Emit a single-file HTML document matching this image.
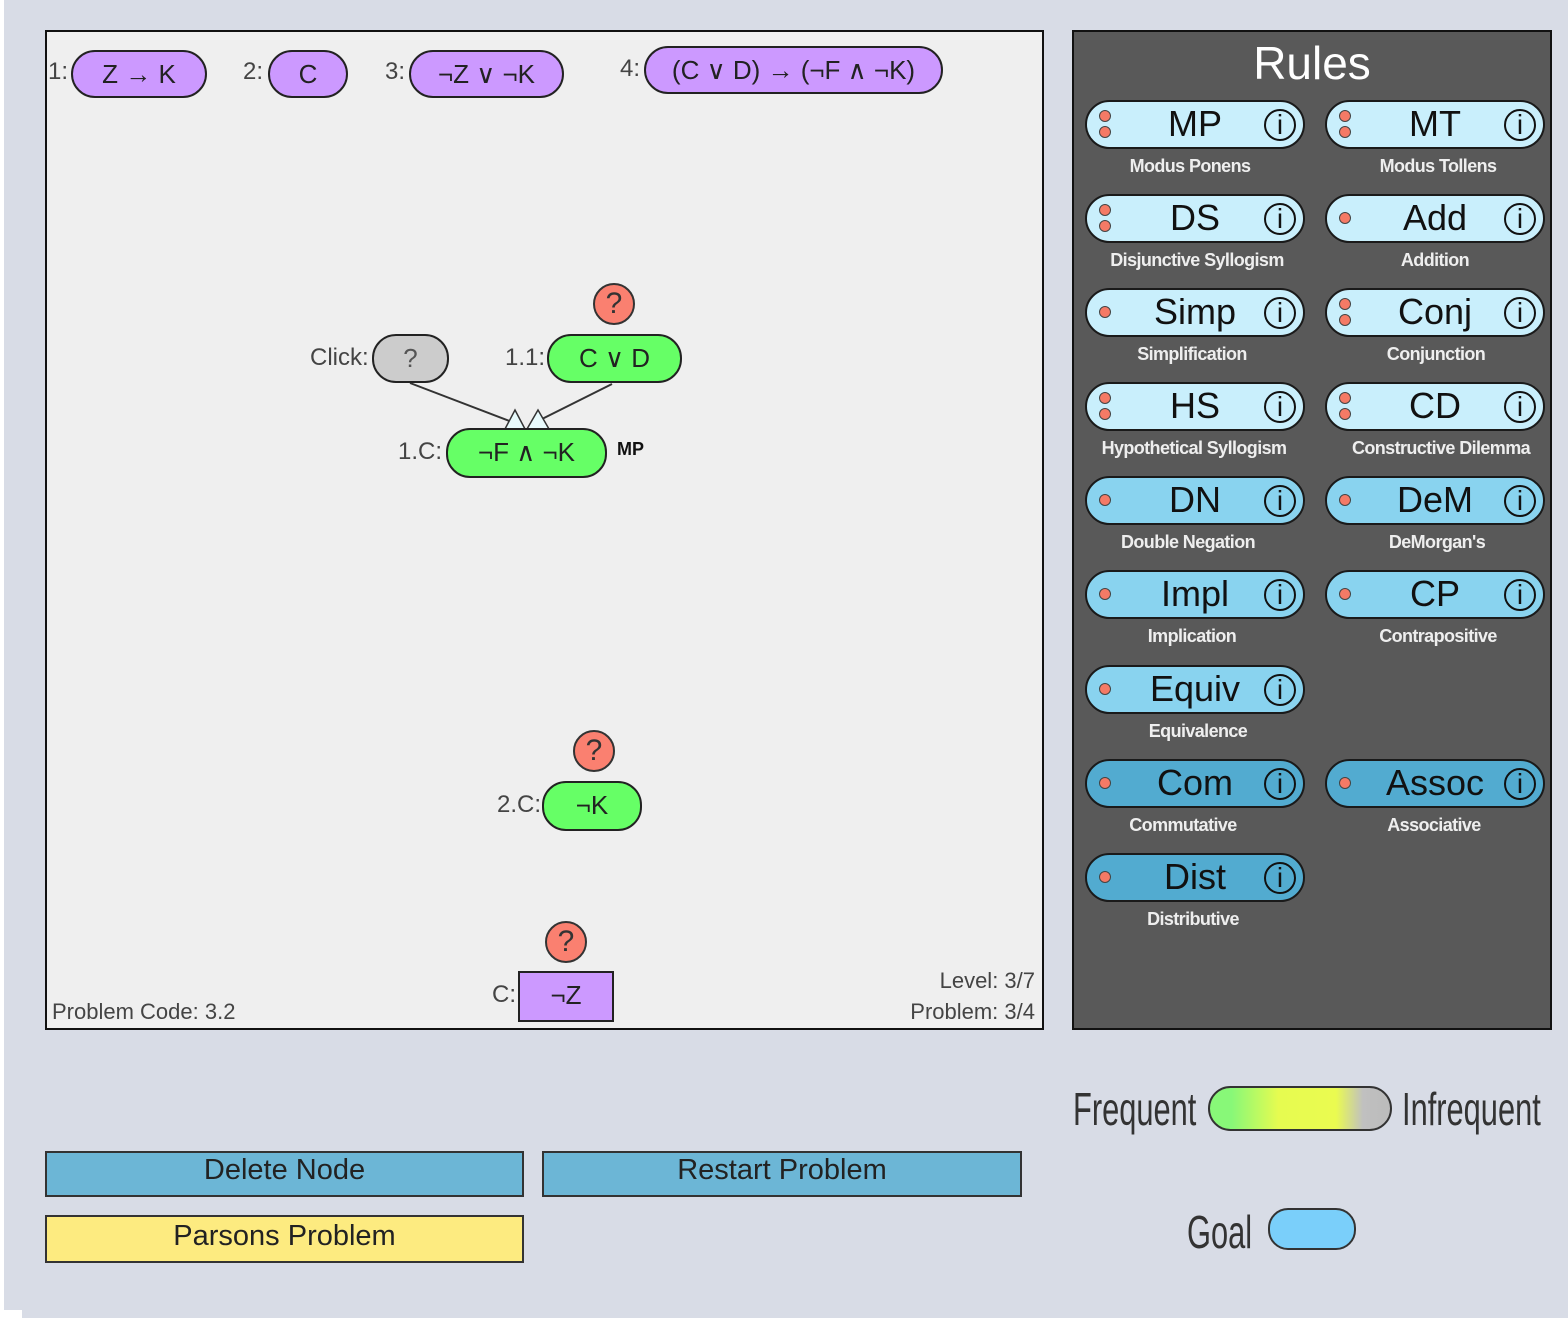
<!DOCTYPE html>
<html><head><meta charset="utf-8"><style>
*{box-sizing:border-box;margin:0;padding:0}
body{width:1568px;height:1318px;background:#d8dce6;position:relative;overflow:hidden;font-family:"Liberation Sans",sans-serif}
.a{position:absolute}
#cv{left:45px;top:30px;width:999px;height:1000px;background:#efefef;border:2px solid #111}
#rp{left:1072px;top:30px;width:480px;height:1000px;background:#595959;border:2px solid #111}
.p{position:absolute;border:2px solid #222;border-radius:24px;text-align:center;color:#222;font-size:26px;line-height:44px}
.pu{background:#cc99ff}
.gr{background:#66ff66}
.lb{position:absolute;font-size:24px;color:#444}
.q{position:absolute;width:42px;height:42px;border-radius:50%;background:#fa8070;border:2px solid #333;text-align:center;font-size:30px;line-height:38px;color:#333}
.r{position:absolute;width:220px;height:49px;border:2px solid #1a1a1a;border-radius:25px}
.r .t{position:absolute;left:0;right:0;top:0;text-align:center;font-size:36px;line-height:44px;color:#111}
.r .d{position:absolute;left:12px;width:12px;height:12px;border-radius:50%;background:#f47a66;border:1px solid #444}
.r .i{position:absolute;right:7px;top:7px;width:32px;height:32px;border-radius:50%;border:2px solid #111;text-align:center;font:28px/28px "Liberation Sans",sans-serif;color:#111}
.l{position:absolute;width:220px;text-align:center;color:#eee;font-weight:bold;font-size:18px;letter-spacing:-0.6px}
.c1{background:#c9effc}.c2{background:#89d3ef}.c3{background:#52abd0}
.btn{position:absolute;height:46px;border:2px solid #333;text-align:center;font-size:29px;line-height:34px;color:#222}
.cond{position:absolute;font-size:46px;color:#333;transform:scaleX(0.67);transform-origin:left top}
</style></head><body>
<div class="a" style="left:0;top:0;width:4px;height:1318px;background:#fff"></div>
<div class="a" style="left:0;top:1310px;width:22px;height:8px;background:#fff"></div>
<div id="cv" class="a"></div>
<div class="lb" style="left:48px;top:58px">1:</div>
<div class="p pu" style="left:71px;top:50px;width:136px;height:48px">Z → K</div>
<div class="lb" style="left:243px;top:58px">2:</div>
<div class="p pu" style="left:268px;top:50px;width:80px;height:48px">C</div>
<div class="lb" style="left:385px;top:58px">3:</div>
<div class="p pu" style="left:409px;top:50px;width:155px;height:48px">¬Z ∨ ¬K</div>
<div class="lb" style="left:620px;top:55px">4:</div>
<div class="p pu" style="left:644px;top:46px;width:299px;height:48px">(C ∨ D) → (¬F ∧ ¬K)</div>

<svg class="a" style="left:0;top:0" width="1568" height="1318">
<line x1="410" y1="383" x2="512" y2="422" stroke="#333" stroke-width="2"/>
<line x1="612" y1="384" x2="540" y2="420" stroke="#333" stroke-width="2"/>
<polygon points="505,429 515,410 525,429" fill="#e8fafc" stroke="#333" stroke-width="1.5"/>
<polygon points="527,429 538,410 549,429" fill="#e8fafc" stroke="#333" stroke-width="1.5"/>
</svg>
<div class="lb" style="left:310px;top:344px">Click:</div>
<div class="p" style="left:372px;top:334px;width:77px;height:49px;background:#cccccc;color:#555">?</div>
<div class="lb" style="left:505px;top:344px">1.1:</div>
<div class="p gr" style="left:547px;top:334px;width:135px;height:49px">C ∨ D</div>
<div class="q" style="left:593px;top:283px">?</div>
<div class="lb" style="left:398px;top:438px">1.C:</div>
<div class="p gr" style="left:446px;top:428px;width:161px;height:50px">¬F ∧ ¬K</div>
<div class="a" style="left:617px;top:439px;font-size:18px;font-weight:bold;color:#111">MP</div>
<div class="q" style="left:573px;top:730px">?</div>
<div class="lb" style="left:497px;top:791px">2.C:</div>
<div class="p gr" style="left:542px;top:781px;width:100px;height:50px">¬K</div>
<div class="q" style="left:545px;top:921px">?</div>
<div class="lb" style="left:492px;top:981px">C:</div>
<div class="p pu" style="left:518px;top:971px;width:96px;height:51px;border-radius:0">¬Z</div>
<div class="lb" style="left:52px;top:999px;font-size:22px">Problem Code: 3.2</div>
<div class="lb" style="right:533px;top:968px;font-size:22px;text-align:right">Level: 3/7</div>
<div class="lb" style="right:533px;top:999px;font-size:22px;text-align:right">Problem: 3/4</div>

<div id="rp" class="a"></div>
<div class="a" style="left:1072px;width:480px;top:36px;text-align:center;color:#fff;font-size:46px">Rules</div>

<div class="r c1" style="left:1085px;top:100px"><i class="d" style="top:8px"></i><i class="d" style="top:24px"></i><span class="t">MP</span><b class="i">i</b></div><div class="l" style="left:1080px;top:156px">Modus Ponens</div>
<div class="r c1" style="left:1325px;top:100px"><i class="d" style="top:8px"></i><i class="d" style="top:24px"></i><span class="t">MT</span><b class="i">i</b></div><div class="l" style="left:1328px;top:156px">Modus Tollens</div>
<div class="r c1" style="left:1085px;top:194px"><i class="d" style="top:8px"></i><i class="d" style="top:24px"></i><span class="t">DS</span><b class="i">i</b></div><div class="l" style="left:1087px;top:250px">Disjunctive Syllogism</div>
<div class="r c1" style="left:1325px;top:194px"><i class="d" style="top:16px"></i><span class="t">Add</span><b class="i">i</b></div><div class="l" style="left:1325px;top:250px">Addition</div>
<div class="r c1" style="left:1085px;top:288px"><i class="d" style="top:16px"></i><span class="t">Simp</span><b class="i">i</b></div><div class="l" style="left:1082px;top:344px">Simplification</div>
<div class="r c1" style="left:1325px;top:288px"><i class="d" style="top:8px"></i><i class="d" style="top:24px"></i><span class="t">Conj</span><b class="i">i</b></div><div class="l" style="left:1326px;top:344px">Conjunction</div>
<div class="r c1" style="left:1085px;top:382px"><i class="d" style="top:8px"></i><i class="d" style="top:24px"></i><span class="t">HS</span><b class="i">i</b></div><div class="l" style="left:1084px;top:438px">Hypothetical Syllogism</div>
<div class="r c1" style="left:1325px;top:382px"><i class="d" style="top:8px"></i><i class="d" style="top:24px"></i><span class="t">CD</span><b class="i">i</b></div><div class="l" style="left:1331px;top:438px">Constructive Dilemma</div>
<div class="r c2" style="left:1085px;top:476px"><i class="d" style="top:16px"></i><span class="t">DN</span><b class="i">i</b></div><div class="l" style="left:1078px;top:532px">Double Negation</div>
<div class="r c2" style="left:1325px;top:476px"><i class="d" style="top:16px"></i><span class="t">DeM</span><b class="i">i</b></div><div class="l" style="left:1327px;top:532px">DeMorgan's</div>
<div class="r c2" style="left:1085px;top:570px"><i class="d" style="top:16px"></i><span class="t">Impl</span><b class="i">i</b></div><div class="l" style="left:1082px;top:626px">Implication</div>
<div class="r c2" style="left:1325px;top:570px"><i class="d" style="top:16px"></i><span class="t">CP</span><b class="i">i</b></div><div class="l" style="left:1328px;top:626px">Contrapositive</div>
<div class="r c2" style="left:1085px;top:665px"><i class="d" style="top:16px"></i><span class="t">Equiv</span><b class="i">i</b></div><div class="l" style="left:1088px;top:721px">Equivalence</div>
<div class="r c3" style="left:1085px;top:759px"><i class="d" style="top:16px"></i><span class="t">Com</span><b class="i">i</b></div><div class="l" style="left:1073px;top:815px">Commutative</div>
<div class="r c3" style="left:1325px;top:759px"><i class="d" style="top:16px"></i><span class="t">Assoc</span><b class="i">i</b></div><div class="l" style="left:1324px;top:815px">Associative</div>
<div class="r c3" style="left:1085px;top:853px"><i class="d" style="top:16px"></i><span class="t">Dist</span><b class="i">i</b></div><div class="l" style="left:1083px;top:909px">Distributive</div>

<div class="btn" style="left:45px;top:1151px;width:479px;background:#6cb6d6">Delete Node</div>
<div class="btn" style="left:542px;top:1151px;width:480px;background:#6cb6d6">Restart Problem</div>
<div class="btn" style="left:45px;top:1215px;width:479px;height:48px;background:#fdeb80;line-height:38px">Parsons Problem</div>

<div class="cond" style="left:1073px;top:1082px">Frequent</div>
<div class="a" style="left:1208px;top:1086px;width:184px;height:45px;border:2px solid #333;border-radius:23px;background:linear-gradient(90deg,#88f878 0%,#88f878 12%,#e6fb50 38%,#eafb50 70%,#c0c0c0 85%,#bbb 100%)"></div>
<div class="cond" style="left:1402px;top:1082px">Infrequent</div>
<div class="cond" style="left:1187px;top:1205px">Goal</div>
<div class="a" style="left:1268px;top:1208px;width:88px;height:42px;border:2px solid #333;border-radius:20px;background:#7acffa"></div>
</body></html>
